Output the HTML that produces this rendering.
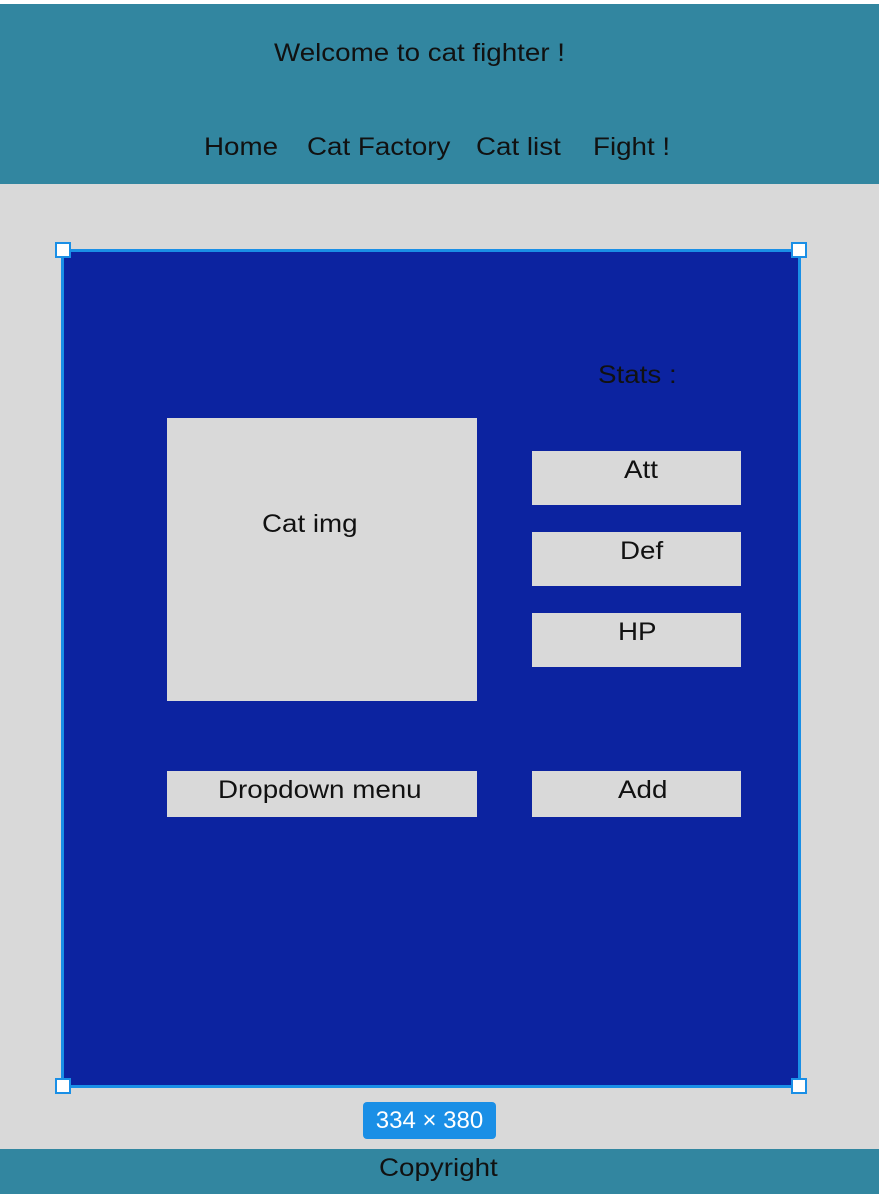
<!DOCTYPE html>
<html><head><style>
body{margin:0;width:879px;height:1194px;background:#d9d9d9;position:relative;overflow:hidden;font-family:"Liberation Sans",sans-serif;color:#111;}
div{position:absolute;box-sizing:border-box;}
.t{font-size:25px;white-space:nowrap;transform:scaleX(1.11);transform-origin:0 0;}
.g{background:#d9d9d9;}
.h{width:16px;height:16px;background:#fff;border:2px solid #1a8fe6;}
</style></head><body>
<div style="left:0;top:0;width:879px;height:4px;background:#fff"></div>
<div style="left:0;top:4px;width:879px;height:180px;background:#3286a0"></div>
<div class="t" style="left:274px;top:39px">Welcome to cat fighter !</div>
<div class="t" style="left:204px;top:133px">Home</div>
<div class="t" style="left:307px;top:133px">Cat Factory</div>
<div class="t" style="left:476px;top:133px">Cat list</div>
<div class="t" style="left:593px;top:133px">Fight !</div>
<div style="left:61px;top:249px;width:740px;height:839px;background:#0c23a0;border:3px solid #1a8fe6"></div>
<div class="h" style="left:55px;top:242px"></div>
<div class="h" style="left:791px;top:242px"></div>
<div class="h" style="left:55px;top:1078px"></div>
<div class="h" style="left:791px;top:1078px"></div>
<div class="t" style="left:598px;top:361px">Stats :</div>
<div class="g" style="left:167px;top:418px;width:310px;height:283px"></div>
<div class="t" style="left:262px;top:510px">Cat img</div>
<div class="g" style="left:532px;top:451px;width:209px;height:54px"></div>
<div class="t" style="left:624px;top:456px">Att</div>
<div class="g" style="left:532px;top:532px;width:209px;height:54px"></div>
<div class="t" style="left:620px;top:537px">Def</div>
<div class="g" style="left:532px;top:613px;width:209px;height:54px"></div>
<div class="t" style="left:618px;top:618px">HP</div>
<div class="g" style="left:167px;top:771px;width:310px;height:46px"></div>
<div class="t" style="left:218px;top:776px">Dropdown menu</div>
<div class="g" style="left:532px;top:771px;width:209px;height:46px"></div>
<div class="t" style="left:618px;top:776px">Add</div>
<div style="left:363px;top:1102px;width:133px;height:37px;background:#1a8fe6;border-radius:4px;color:#fff;font-size:24px;text-align:center;line-height:37px">334 × 380</div>
<div style="left:0;top:1149px;width:879px;height:45px;background:#3286a0"></div>
<div class="t" style="left:379px;top:1154px">Copyright</div>
</body></html>
